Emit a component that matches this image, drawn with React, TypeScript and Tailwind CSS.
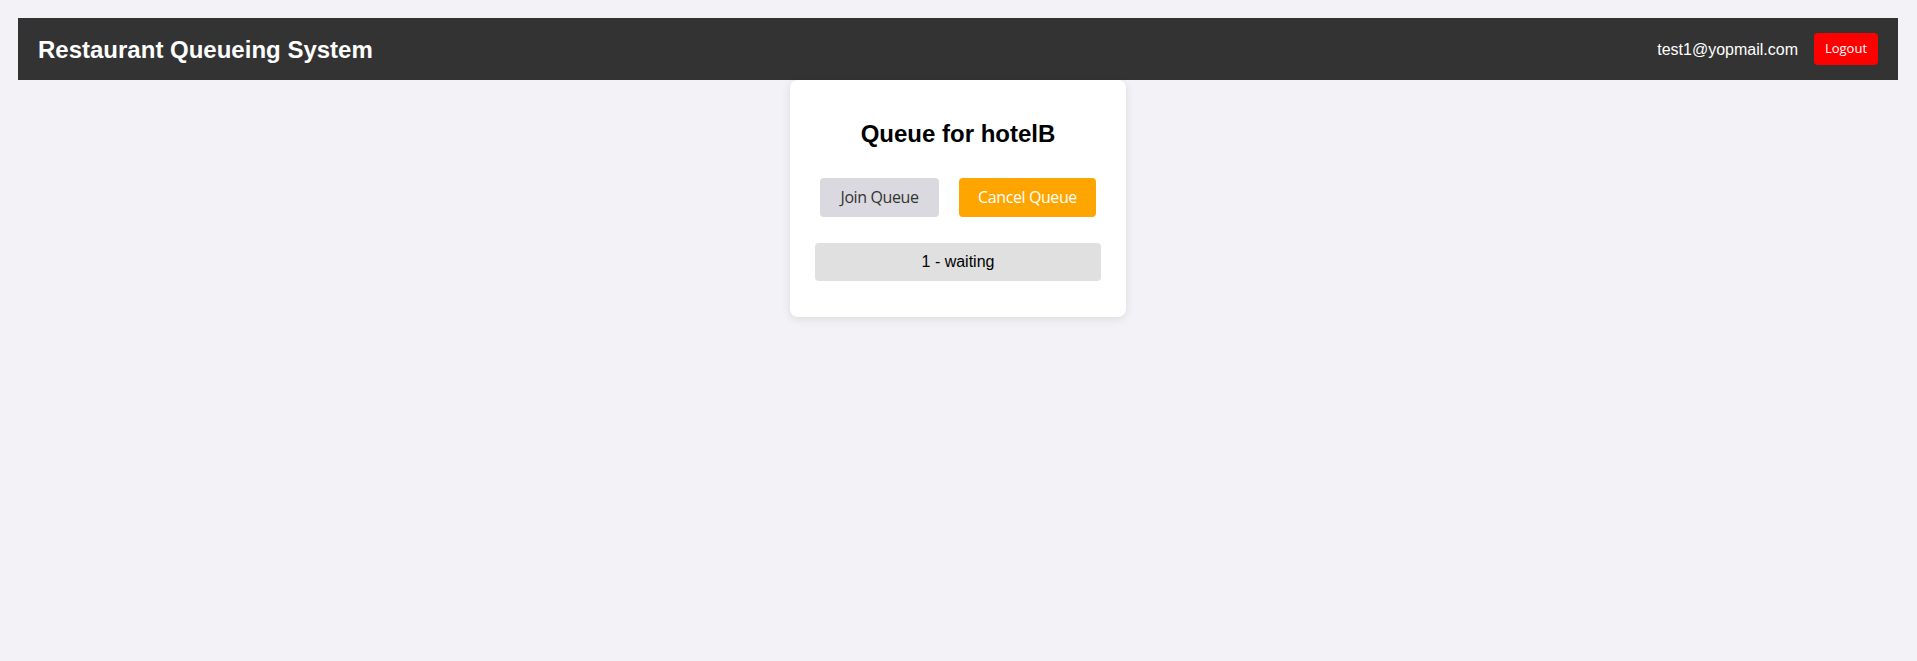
import React from 'react';

const App: React.FC = () => {
  return (
    <div className="min-h-[661px] bg-[#f3f2f7] p-[18px] pr-[19px] font-['Liberation_Sans',Arial,sans-serif]">
      <header className="flex h-[62px] items-center justify-between bg-[#333333] px-5">
        <h1 className="mt-[2px] text-[24px] font-bold leading-[28px] text-white">Restaurant Queueing System</h1>
        <div className="flex items-center gap-4">
          <span className="mt-[2px] text-[16px] text-white">test1@yopmail.com</span>
          <button className="h-8 w-16 rounded bg-[#ff0000] font-['Open_Sans',sans-serif] text-[13px] font-medium text-white">
            Logout
          </button>
        </div>
      </header>

      <div className="mx-auto w-[336px] rounded-lg bg-white px-[25px] pb-[36px] pt-[40px] shadow-[0_2px_10px_rgba(0,0,0,0.1)]">
        <h2 className="text-center text-[24px] font-bold leading-[28px] text-black">Queue for hotelB</h2>
        <div className="mt-[30px] flex justify-center gap-5 font-['Open_Sans',sans-serif] text-[16px] tracking-[-0.4px]">
          <button className="w-[119px] rounded bg-[#dad9df] py-[10px] leading-[19px] text-[#333333]">Join Queue</button>
          <button className="w-[137px] rounded bg-[#ffa500] py-[10px] leading-[19px] text-white">Cancel Queue</button>
        </div>
        <div className="mt-[26px] rounded bg-[#e0e0e0] py-[10px] text-center text-[16px] leading-[18px] text-black">
          1 - waiting
        </div>
      </div>
    </div>
  );
};

export default App;
